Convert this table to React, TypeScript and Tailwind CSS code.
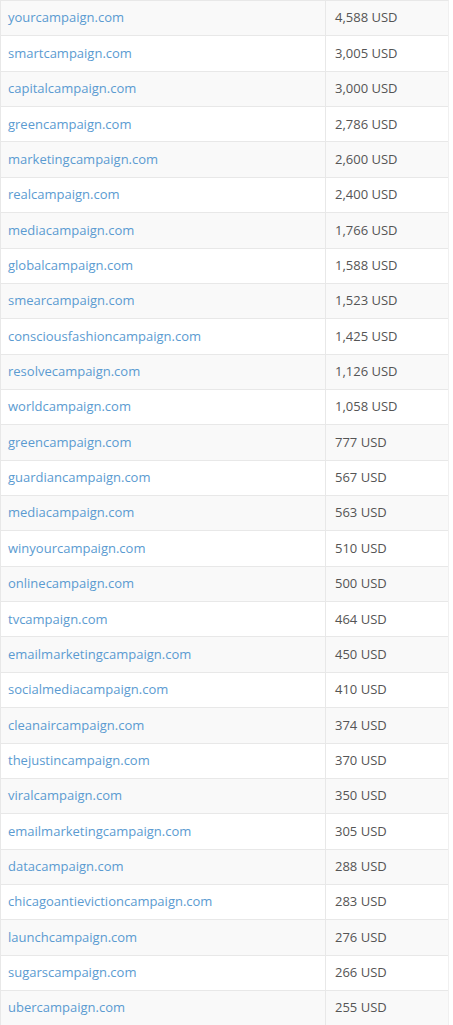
import React from "react";

const rows: [string, string][] = [
  ["yourcampaign.com", "4,588 USD"],
  ["smartcampaign.com", "3,005 USD"],
  ["capitalcampaign.com", "3,000 USD"],
  ["greencampaign.com", "2,786 USD"],
  ["marketingcampaign.com", "2,600 USD"],
  ["realcampaign.com", "2,400 USD"],
  ["mediacampaign.com", "1,766 USD"],
  ["globalcampaign.com", "1,588 USD"],
  ["smearcampaign.com", "1,523 USD"],
  ["consciousfashioncampaign.com", "1,425 USD"],
  ["resolvecampaign.com", "1,126 USD"],
  ["worldcampaign.com", "1,058 USD"],
  ["greencampaign.com", "777 USD"],
  ["guardiancampaign.com", "567 USD"],
  ["mediacampaign.com", "563 USD"],
  ["winyourcampaign.com", "510 USD"],
  ["onlinecampaign.com", "500 USD"],
  ["tvcampaign.com", "464 USD"],
  ["emailmarketingcampaign.com", "450 USD"],
  ["socialmediacampaign.com", "410 USD"],
  ["cleanaircampaign.com", "374 USD"],
  ["thejustincampaign.com", "370 USD"],
  ["viralcampaign.com", "350 USD"],
  ["emailmarketingcampaign.com", "305 USD"],
  ["datacampaign.com", "288 USD"],
  ["chicagoantievictioncampaign.com", "283 USD"],
  ["launchcampaign.com", "276 USD"],
  ["sugarscampaign.com", "266 USD"],
  ["ubercampaign.com", "255 USD"],
];

export default function App() {
  return (
    <div
      className="w-[453px] bg-white text-[13px]"
      style={{ fontFamily: '"Open Sans", "Liberation Sans", sans-serif' }}
    >
      <div className="w-[449px] border-t border-l border-r border-t-[#e8e8e8] border-l-[#e8e8e8] border-r-[#f0f0f0]">
        {rows.map(([domain, price], i) => (
          <div
            key={i}
            className={`flex h-[35.36px] border-b border-[#e8e8e8] ${
              i % 2 === 0 ? "bg-[#f9f9f9]" : "bg-white"
            }`}
          >
            <div className="flex w-[325px] shrink-0 items-center border-r border-[#e8e8e8] pl-[7px]">
              <a className="text-[#5b9bd1]" href="#">
                {domain}
              </a>
            </div>
            <div className="flex flex-1 items-center pl-[9px] text-[#555555]">
              {price}
            </div>
          </div>
        ))}
      </div>
    </div>
  );
}
